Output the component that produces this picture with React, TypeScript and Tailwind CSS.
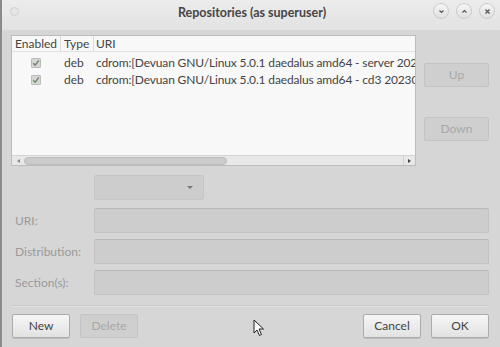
import React from "react";

const rows = [
  { type: "deb", uri: "cdrom:[Devuan GNU/Linux 5.0.1 daedalus amd64 - server 20230614]/ daedalus main" },
  { type: "deb", uri: "cdrom:[Devuan GNU/Linux 5.0.1 daedalus amd64 - cd3 20230614]/ daedalus main" },
];

const TitleButton = ({ children }: { children: React.ReactNode }) => (
  <div className="w-[16px] h-[16px] rounded-full bg-gradient-to-b from-[#f6f6f6] to-[#e0e0e0] border border-[#cbcbcb] flex items-center justify-center">
    {children}
  </div>
);

const Button = ({ label, disabled, className }: { label: string; disabled?: boolean; className?: string }) => (
  <div
    className={
      "h-[24px] shrink-0 flex items-center justify-center rounded-[2px] border text-[12px] leading-none " +
      (disabled
        ? "bg-[#cfcfcf] border-[#c4c4c4] text-[#a8a8a8] "
        : "bg-gradient-to-b from-[#f6f6f6] to-[#e2e2e2] border-[#ababab] text-[#444] shadow-[0_1px_0_#c0c0c0] ") +
      (className ?? "")
    }
  >
    {label}
  </div>
);

const Entry = () => (
  <div className="flex-1 h-[25px] rounded-[2px] bg-[#cdcdcd] border border-[#c2c2c2] border-t-[#b8b8b8]" />
);

const Check = () => (
  <div className="w-[10px] h-[10px] shrink-0 bg-[#d6d6d6] border border-[#bcbcbc] rounded-[1px] flex items-center justify-center">
    <svg width="8" height="8" viewBox="0 0 8 8">
      <path d="M1.2 4.2 L3.2 6.2 L6.8 1.4" stroke="#6f8a66" strokeWidth="1.5" fill="none" />
    </svg>
  </div>
);

export default function App() {
  return (
    <div
      className="w-[500px] h-[347px] bg-[#d6d6d6] border-l-2 border-[#8a8a8a] flex flex-col overflow-hidden text-[#444]"
      style={{ fontFamily: 'Lato, "Open Sans", sans-serif' }}
    >
      {/* title bar */}
      <div className="h-[30px] shrink-0 bg-gradient-to-b from-[#ececec] to-[#e2e2e2] flex items-center relative">
        <div className="absolute left-[8px] top-[7px] w-[9px] h-[9px] rounded-full bg-[#e6e6e6] border border-[#cfcfcf]" />
        <div className="flex-1 text-center font-bold text-[12.5px] text-[#454545] -mt-[3px] pl-[2px]">
          Repositories (as superuser)
        </div>
        <div className="absolute right-[5px] top-[3px] flex gap-[7px]">
          <TitleButton>
            <svg width="7" height="7" viewBox="0 0 7 7">
              <path d="M1.5 2.5 L3.5 4.5 L5.5 2.5" stroke="#555" strokeWidth="1.2" fill="none" />
            </svg>
          </TitleButton>
          <TitleButton>
            <svg width="7" height="7" viewBox="0 0 7 7">
              <path d="M1.5 4.5 L3.5 2.5 L5.5 4.5" stroke="#555" strokeWidth="1.2" fill="none" />
            </svg>
          </TitleButton>
          <TitleButton>
            <svg width="7" height="7" viewBox="0 0 7 7">
              <path d="M1.5 1.5 L5.5 5.5 M5.5 1.5 L1.5 5.5" stroke="#555" strokeWidth="1.3" fill="none" />
            </svg>
          </TitleButton>
        </div>
      </div>

      <div className="flex-1 flex flex-col pl-[9px] pr-[11px]">
        {/* tree + up/down */}
        <div className="flex gap-[8px] mt-[5px]">
          <div className="w-[405px] h-[131px] shrink-0 bg-[#f8f8f8] border border-[#bdbdbd] flex flex-col text-[12px] overflow-hidden">
            <div className="h-[16px] flex border-b border-[#e0e0e0] leading-[16px] text-[#444]">
              <div className="w-[49px] shrink-0 pl-[3px] border-r border-[#dcdcdc]">Enabled</div>
              <div className="w-[33px] shrink-0 pl-[3px] border-r border-[#dcdcdc]">Type</div>
              <div className="pl-[2px]">URI</div>
            </div>
            <div className="flex-1 overflow-hidden pt-[2px]">
              {rows.map((r, i) => (
                <div key={i} className="h-[17px] flex items-center whitespace-nowrap">
                  <div className="w-[49px] shrink-0 flex justify-center pr-[2px]">
                    <Check />
                  </div>
                  <div className="w-[33px] shrink-0 pl-[3px]">{r.type}</div>
                  <div className="pl-[2px] tracking-[-0.15px]">{r.uri}</div>
                </div>
              ))}
            </div>
            <div className="h-[10px] shrink-0 flex items-center bg-[#e8e8e8] border-t border-[#d4d4d4]">
              <div className="w-[12px] flex justify-center">
                <div className="w-0 h-0 border-y-[2.5px] border-y-transparent border-r-[3px] border-r-[#888]" />
              </div>
              <div className="w-[203px] h-[8px] rounded-[4px] bg-[#cbcbcb] border border-[#bdbdbd]" />
              <div className="flex-1" />
              <div className="w-[12px] h-full flex justify-center items-center border-l border-[#d0d0d0]">
                <div className="w-0 h-0 border-y-[2.5px] border-y-transparent border-l-[3px] border-l-[#444]" />
              </div>
            </div>
          </div>
          <div className="flex flex-col w-[65px] pt-[28px]">
            <Button label="Up" disabled className="h-[23px]" />
            <Button label="Down" disabled className="h-[23px] mt-[30px]" />
          </div>
        </div>

        {/* form */}
        <div className="flex mt-[9px] pl-[83px]">
          <div className="w-[110px] h-[25px] rounded-[2px] bg-[#cdcdcd] border border-[#c6c6c6] flex items-center justify-end pr-[10px]">
            <div className="w-0 h-0 border-x-[3px] border-x-transparent border-t-[3.5px] border-t-[#777]" />
          </div>
        </div>
        <div className="flex flex-col gap-[6px] mt-[8px] text-[12px] text-[#9a9a9a]">
          {["URI:", "Distribution:", "Section(s):"].map((l) => (
            <div key={l} className="flex items-center">
              <div className="w-[83px] shrink-0 pl-[4px]">{l}</div>
              <Entry />
            </div>
          ))}
        </div>

        <div className="mt-[10px] border-t border-[#c8c8c8] shadow-[0_1px_0_#e2e2e2]" />

        <div className="flex items-center mt-[8px] pl-[1px]">
          <Button label="New" className="w-[58px]" />
          <Button label="Delete" disabled className="w-[58px] ml-[10px]" />
          <div className="flex-1 flex justify-center">
            <svg width="12" height="18" viewBox="0 0 12 18" className="ml-[16px] mt-[4px]">
              <path d="M1 1 L1 14 L4 11 L6.5 16.5 L8.5 15.5 L6 10 L10.5 10 Z" fill="#fff" stroke="#222" strokeWidth="1" />
            </svg>
          </div>
          <Button label="Cancel" className="w-[58px]" />
          <Button label="OK" className="w-[58px] ml-[10px]" />
        </div>
      </div>
    </div>
  );
}
